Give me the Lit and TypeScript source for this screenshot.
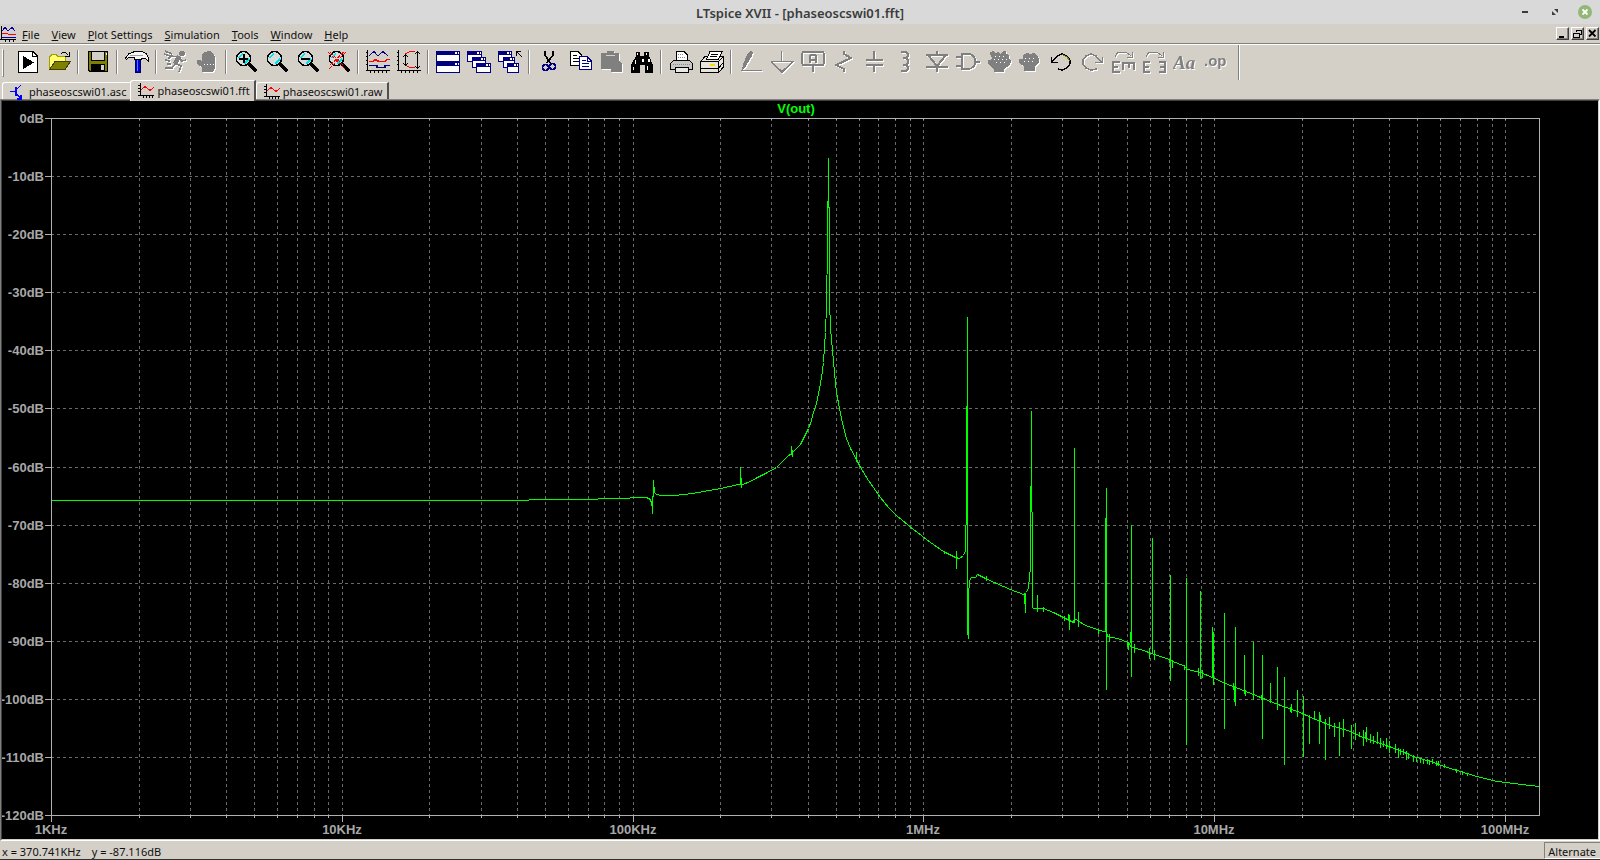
import { LitElement, html, css, svg } from "lit";
import { customElement, state } from "lit/decorators.js";
import { classMap } from "lit/directives/class-map.js";

/* ---------- toolbar artwork, each on a 24 x 24 grid ---------- */

const lens = (inner: unknown) => svg`
  <path d="M15 14 L22.5 21.5" stroke="#000" stroke-width="3" fill="none"/>
  <circle cx="9.5" cy="8.5" r="7" fill="#d4dcdc" stroke="#000" stroke-width="1.3"/>
  <path d="M4.5 8 L9 3.5 M10 14 L15 9" stroke="#00e0e8" stroke-width="1.6" fill="none"/>
  ${inner}`;

const win = (x: number, y: number, w: number, h: number) => svg`
  <rect x=${x + 0.5} y=${y + 0.5} width=${w - 1} height=${h - 1} fill="#fff" stroke="#000080"/>
  <rect x=${x} y=${y} width=${w} height="4" fill="#000080"/>
  <rect x=${x + w - 5} y=${y + 1} width="2" height="2" fill="#fff"/>
  <rect x=${x + w - 2} y=${y + 1} width="1" height="2" fill="#fff"/>`;

const axes = svg`<path d="M1.5 0 V21 M0 20.5 H24 M0 2.5 H2 M0 6.5 H2 M0 10.5 H2 M0 14.5 H2
  M4.5 20 V23 M8.5 20 V23 M12.5 20 V23 M16.5 20 V23 M20.5 20 V23" stroke="#000" fill="none"/>`;

const g = "#808080";

interface Tool {
  label: string;
  off?: boolean;
  end?: boolean;
  art: unknown;
}

const TOOLS: Tool[] = [
  { label: "Run", art: svg`<path d="M2.5 1.5 H17 L21.5 6 V22.5 H2.5 Z" fill="#fff" stroke="#000"/><path d="M16.5 1.5 V6.5 H21.5" fill="none" stroke="#000"/><path d="M7 6 L18 12.5 L7 19 Z"/>` },
  { label: "Open", end: true, art: svg`<path d="M2.5 19 V7 L5 4.5 H9 L11 6.5 H18.5 V12 H9 Z" fill="#ffff70" stroke="#a0a000"/><path d="M2.5 19.5 L8 11.5 H23.5 L18 19.5 Z" fill="#808000" stroke="#404000"/><path d="M14 4 L16 2 H18 L21 5 M22.5 2 V6.5 H18" fill="none" stroke="#000"/>` },
  { label: "Save", end: true, art: svg`<path d="M2.5 1.5 H21.5 V21.5 H4 L2.5 20 Z" fill="#808000" stroke="#000"/><rect x="5.5" y="1.5" width="13" height="9" fill="#d4d0c8" stroke="#000"/><rect x="5" y="14" width="14" height="7" fill="#000"/><rect x="15" y="15" width="3" height="5" fill="#d4d0c8"/><path d="M20 3 h1 v2 h-1z" fill="#fff"/>` },
  { label: "Control Panel", end: true, art: svg`<path d="M10.5 8 H15.5 V22.5 H10.5 Z" fill="#0000d0" stroke="#000060"/><path d="M12.5 9 V21" stroke="#4a7cff"/><path d="M.5 8 L4 3.5 L8 2.5 V1.5 H17 L21 3.5 L23.5 8 V11 L20 8 H16 V9.5 H9.5 V7 H4 L1.5 9.5 Z" fill="#f4f4f4" stroke="#000"/><path d="M5 5.5 H18" stroke="#a0a0a0"/>` },
  { label: "Run simulation", off: true, art: svg`<circle cx="18" cy="3.5" r="2.8" fill=${g}/><path d="M15 6 L11 14" stroke=${g} stroke-width="4.5"/><path d="M15 7 L7 6 L4 9 M15 8 L18 11 L22 10 M11 13 L17 16 L15 22 M11 14 L8 18 L1 18 M1 1 L8 4 M0 4 L6 6 M1 10 L6 11 M3 14 L7 14" fill="none" stroke=${g} stroke-width="1.6"/>` },
  { label: "Halt", off: true, end: true, art: svg`<path d="M7 22 V17 L2 14 V10 H5 L7 12 V4 L9 2 H11 L12 1 H15 L16 2 L19 4 L20 7 V18 L18 22 Z" fill=${g}/><path d="M9 14.5 H19" stroke="#fff" stroke-dasharray="1 2"/>` },
  { label: "Zoom in", art: lens(svg`<path d="M5 9 H14 M9.5 4 V13" stroke="#000" stroke-width="2"/>`) },
  { label: "Pan", art: lens("") },
  { label: "Zoom out", art: lens(svg`<path d="M5 9 H14" stroke="#000" stroke-width="2"/>`) },
  { label: "Zoom full extents", end: true, art: lens(svg`<path d="M1 2 L19 20 M19 2 L1 20 M3 2 L17 16 M17 2 L3 15" stroke="#f00" stroke-width="1.3" stroke-dasharray="4 1"/>`) },
  { label: "Autorange", art: svg`${axes}<path d="M3 6 L8 1.5 L12 6 L17 1.5 L22 6" fill="none" stroke="#000080"/><path d="M3 11.5 H7 L9 9.5 L13 11.5 H19 L21 9.5 H24" fill="none" stroke="#f00" stroke-width="1.4"/><path d="M3 15.5 H11 V17.5 H19 V15.5 H24" fill="none" stroke="#000080" stroke-width="1.4"/>` },
  { label: "Set limits", end: true, art: svg`${axes}<path d="M8 4 L12 2 L18 1 M8 15 L12 17 L18 18" fill="none" stroke="#f00"/><path d="M8.5 5 V15 M6 7 L8.5 4.5 L11 7 M6 13 L8.5 15.5 L11 13 M20.5 2 V18 M18 4 L20.5 1.5 L23 4 M18 16 L20.5 18.5 L23 16" fill="none" stroke="#000"/>` },
  { label: "Tile windows", art: svg`${win(0, 1, 24, 11)}${win(0, 12, 24, 11)}` },
  { label: "Cascade windows", art: svg`${win(0, 1, 15, 11)}${win(5, 7, 14, 11)}${win(9, 13, 15, 10)}` },
  { label: "Close windows", end: true, art: svg`${win(0, 1, 14, 11)}${win(5, 7, 12, 11)}${win(9, 13, 12, 10)}<path d="M18.5 6 V1.5 H23 M19 2 L24 7" fill="none" stroke="#000" stroke-width="1.4"/>` },
  { label: "Cut", art: svg`<path d="M8 1 V5 L13 13 M16 1 V5 L10 13" fill="none" stroke="#000" stroke-width="1.6"/><circle cx="8.5" cy="17.5" r="3" fill="none" stroke="#000080" stroke-width="1.6"/><circle cx="15.5" cy="16.5" r="3" fill="none" stroke="#000080" stroke-width="1.6"/>` },
  { label: "Copy", art: svg`<path d="M2.5 1.5 H10 L13.5 5 V15.5 H2.5 Z" fill="#fff" stroke="#000"/><path d="M5 5.5 H9 M5 8.5 H11 M5 11.5 H11" stroke="#000"/><path d="M11.5 6.5 H19 L23.5 11 V19.5 H11.5 Z" fill="#fff" stroke="#000080"/><path d="M14 10.5 H18 M14 13.5 H21 M14 16.5 H21 M19 6.5 V11 H23" fill="none" stroke="#000080"/>` },
  { label: "Paste", off: true, art: svg`<path d="M2 3 H8 V1 H15 V3 H20 V11 L23 13 V22 H12 V19 H2 Z" fill=${g}/><path d="M7 5.5 H16" stroke="#d4d0c8"/>` },
  { label: "Find", end: true, art: svg`<path d="M6 2 H10 V6 H14 V2 H19 V6 L23 15 V23 H15 V15 H10 V23 H1 V15 L6 6 Z" fill="#000"/><path d="M7 4 h1 M16 4 h1 M5.5 10 V14 M3.5 17 V20 M13 9 V12 M17.5 16 V20 M19 9 V12" stroke="#fff" stroke-width="1.4"/>` },
  { label: "Print", art: svg`<path d="M7.5 10 V1.5 H15 L18.5 5 V10" fill="#fff" stroke="#000"/><path d="M4.5 10.5 H20.5 L23.5 13.5 V19.5 H1.5 V13.5 Z" fill="#c8c8c8" stroke="#000"/><path d="M6.5 22.5 V17.5 H19.5 V22.5 Z" fill="#e8e8e8" stroke="#000"/><path d="M9 4.5 H14 M9 7.5 H16 M4 14.5 H21" stroke="#888" stroke-dasharray="1 1"/>` },
  { label: "Print setup", end: true, art: svg`<path d="M.5 11.5 L5 6.5 H23.5 V17 L18.5 22.5 H.5 Z" fill="#e8e4dc" stroke="#000"/><path d="M6.5 9.5 L10 1.5 H22 L18.5 9.5 Z" fill="#fff" stroke="#000"/><path d="M11 4.5 H18 M10 6.5 H17 M.5 11.5 H18.5 V22 M.5 18.5 H18.5 M18.5 11.5 L23 7 M18.5 18 L23 13" fill="none" stroke="#000"/><path d="M10 15 H15" stroke="#f0e000" stroke-width="2"/>` },
  { label: "Wire", off: true, art: svg`<path d="M3 20 L4 14 L9 3 L12 1 L14 3 L13 6 L7 16 Z" fill=${g}/><path d="M2 20.5 H23" stroke=${g}/>` },
  { label: "Ground", off: true, art: svg`<path d="M11.5 1 V11 M1 11.5 H23 L12 22 L1 11.5" fill="none" stroke=${g} stroke-width="1.6"/>` },
  { label: "Label net", off: true, art: svg`<path d="M2 2 H22 L23 4 V13 L22 15 H2 L1 13 V4 Z M12 15 V22" fill="none" stroke=${g} stroke-width="2"/><path d="M9 13 V6 L10 5 H14 L15 6 V13 M9 10 H15" fill="none" stroke=${g} stroke-width="2"/>` },
  { label: "Resistor", off: true, art: svg`<path d="M12 1 V4 L19 8 L4 15 L12 19 V22" fill="none" stroke=${g} stroke-width="2"/>` },
  { label: "Capacitor", off: true, art: svg`<path d="M11 1 V9 M3 10 H20 M3 15 H20 M11 16 V22" fill="none" stroke=${g} stroke-width="2"/>` },
  { label: "Inductor", off: true, art: svg`<path d="M7 2 H12 L14 4 V6 L12 8 H9 M12 8 L14 10 V13 L12 15 H9 M12 15 L14 17 V19 L12 21 H7" fill="none" stroke=${g} stroke-width="2.2"/>` },
  { label: "Diode", off: true, art: svg`<path d="M12 1 V5 M1 5 H23 M3 5 L12 16 L21 5 M1 17 H23 M12 17 V22" fill="none" stroke=${g} stroke-width="2"/>` },
  { label: "Component", off: true, art: svg`<path d="M0 7 H5 M0 16 H5 M5 4 H12 C17 4 19 8 19 11.5 C19 15 17 19 12 19 H5 M6 3 V20 M19 12 H24" fill="none" stroke=${g} stroke-width="2"/>` },
  { label: "Move", off: true, art: svg`<path d="M7 22 V19 L1 14 V10 H4 L5 8 L3 4 V2 L6 1 L9 3 L11 2 L13 4 L16 1 H19 V4 L22 5 V8 L24 11 L23 15 L17 19 V22 Z" fill=${g}/><path d="M8 6.5 H20 M7 9.5 H21 M9 12.5 H18" stroke="#fff" stroke-dasharray="1 3"/>` },
  { label: "Drag", off: true, art: svg`<path d="M6 21 V16 L1 13 V9 L5 9 V5 L9 3 L12 4 L16 3 L19 5 L21 9 V13 L17 16 V21 Z" fill=${g}/><path d="M7 8.5 H18 M6 11.5 H15" stroke="#fff" stroke-dasharray="1 3"/>` },
  { label: "Undo", art: svg`<path d="M3 12 L9 5.5 L13 4 L18 6 L21 10 V14 L18 18 L13 20 L9 19" fill="none" stroke="#000" stroke-width="1.4"/><path d="M13 4.5 L18 7 L20.5 11" fill="none" stroke="#808000"/><path d="M2.5 7 V12.5 H9" fill="none" stroke="#000" stroke-width="1.6"/>` },
  { label: "Redo", off: true, art: svg`<path d="M21 12 L16 6 L11 4 L6 6 L3 10 V14 L6 18 L11 20 L17 19" fill="none" stroke=${g} stroke-width="1.5"/><path d="M22.5 7 V12.5 H15" fill="none" stroke=${g} stroke-width="1.8"/>` },
  { label: "Rotate", off: true, art: svg`<path d="M4 7 L7 2 H15 L20 6 M21 2 V7 H16" fill="none" stroke=${g}/><path d="M9 12 H2 V22 H9 M2 17 H7 M12 20 V13 H24 M18 12 V18 M23 12 V20" fill="none" stroke=${g} stroke-width="2"/>` },
  { label: "Mirror", off: true, art: svg`<path d="M4 7 L7 2 H15 L20 6 M21 2 V7 H16" fill="none" stroke=${g}/><path d="M8 12 H2 V22 H8 M2 17 H7 M17 12 H23 V22 H17 M18 17 H23" fill="none" stroke=${g} stroke-width="2"/>` },
  { label: "Text", off: true, art: svg`<text x="0" y="19" class="glyph serif">Aa</text>` },
  { label: "SPICE directive", off: true, art: svg`<text x="0" y="16" class="glyph">.op</text>` },
];

/* ---------- spectrum, in chart units ---------- */

const BOX = { left: 51, right: 1539, top: 118, bottom: 815 };

const CURVE: number[][] = [
  [51, 500], [528, 500], [529, 499], [597, 499], [598, 498], [629, 498], [630, 497], [646, 497], [650, 499],
  [652, 507], [652, 513], [653, 480], [654, 492], [656, 494], [661, 495], [674, 495], [692, 493], [703, 491],
  [720, 488], [738, 484], [742, 484], [750, 481], [757, 477], [765, 473], [776, 467], [782, 461], [787, 456],
  [791, 453], [796, 448], [800, 444], [804, 436], [808, 428], [811, 420], [813, 412], [816, 403],
  [819, 388], [821, 377], [823, 362], [824, 345], [825, 332], [826, 305], [827, 245], [828, 158], [829, 255],
  [829, 300], [830, 328], [832, 350], [834, 372], [836, 392], [839, 408], [842, 423], [846, 438], [850, 448],
  [855, 457], [860, 467], [868, 480], [880, 497], [888, 507], [896, 515], [913, 529], [930, 542], [943, 551],
  [955, 557], [959, 558], [963, 555], [965, 550], [966, 500], [967, 317], [967, 631], [968, 638], [968, 595],
  [969, 580], [971, 577], [975, 577], [977, 574], [985, 578], [996, 583], [1010, 589], [1023, 594], [1026, 592],
  [1028, 587], [1030, 567], [1031, 411], [1032, 607], [1033, 608], [1043, 608], [1053, 612], [1063, 617],
  [1073, 622], [1074, 618], [1077, 620], [1085, 625], [1097, 629], [1103, 631], [1106, 630], [1107, 636],
  [1117, 638], [1128, 642], [1131, 647], [1140, 649], [1154, 654], [1169, 659], [1172, 661], [1183, 665],
  [1187, 669], [1200, 672], [1212, 677], [1225, 683], [1243, 690], [1253, 694], [1270, 701], [1283, 706],
  [1297, 711], [1313, 718], [1330, 725], [1347, 730], [1363, 737], [1380, 743], [1397, 749], [1413, 756],
  [1430, 761], [1447, 767], [1463, 772], [1480, 777], [1497, 781], [1513, 783], [1530, 785], [1539, 786],
];

/* x, upper end, lower end */
const SPURS: number[][] = [
  [740, 467, 484], [741, 478, 487], [791, 446, 454], [792, 450, 456], [856, 452, 461], [944, 551, 553],
  [956, 551, 568], [986, 576, 580], [1024, 594, 603], [1025, 594, 612], [1037, 595, 611],
  [1043, 607, 611], [1064, 616, 620], [1068, 614, 618], [1069, 615, 629], [1074, 448, 622], [1078, 612, 626],
  [1098, 629, 633], [1105, 518, 631], [1106, 488, 689], [1109, 634, 641], [1127, 642, 646], [1128, 642, 649],
  [1130, 632, 642], [1131, 525, 676], [1134, 644, 652], [1149, 648, 658], [1152, 538, 653], [1154, 650, 659],
  [1169, 659, 662], [1170, 575, 680], [1172, 660, 667], [1184, 665, 669], [1186, 578, 744], [1198, 668, 675],
  [1200, 591, 678], [1202, 670, 677], [1212, 627, 677], [1213, 632, 684], [1224, 613, 728], [1233, 683, 689],
  [1234, 688, 701], [1235, 627, 705], [1244, 655, 693], [1245, 690, 695], [1253, 642, 699], [1261, 695, 699],
  [1262, 655, 738], [1270, 683, 702], [1277, 667, 709], [1284, 677, 764], [1290, 707, 711], [1291, 704, 712],
  [1297, 690, 716], [1303, 696, 756], [1309, 715, 743], [1314, 711, 719], [1319, 712, 743], [1320, 715, 720],
  [1325, 719, 759], [1329, 717, 728], [1334, 723, 736], [1339, 722, 755], [1343, 719, 736], [1351, 725, 748],
  [1355, 723, 739], [1359, 732, 736], [1363, 730, 745], [1365, 732, 737], [1366, 727, 741], [1370, 734, 742],
  [1373, 736, 743], [1377, 732, 743], [1380, 738, 747], [1383, 741, 746], [1386, 738, 748], [1389, 741, 752],
  [1395, 744, 752], [1398, 748, 757], [1400, 749, 754], [1403, 749, 754], [1406, 751, 759], [1408, 753, 758],
  [1413, 755, 761], [1416, 757, 761], [1420, 758, 762], [1423, 759, 763], [1427, 759, 763], [1429, 760, 764],
  [1432, 759, 763], [1436, 761, 765], [1438, 761, 765], [1444, 764, 767], [1456, 769, 772], [1462, 771, 774],
  [1467, 773, 775],
];

@customElement("spectrum-plot")
export class SpectrumPlot extends LitElement {
  @state() private w = 0;
  @state() private h = 0;
  private watcher?: ResizeObserver;

  static styles = css`
    :host { display: block; overflow: hidden; background: #000; }
    .sheet { display: block; shape-rendering: crispEdges; }
    .grid { stroke: #6a6a6a; stroke-dasharray: 3 3; fill: none; }
    .frame { stroke: #b0b0b0; fill: none; }
    .trace { stroke: #00ff00; fill: none; }
    text { font: bold 13px "Liberation Sans", Arial, sans-serif; fill: #a8a8a8; }
    .mid { text-anchor: middle; }
    .end { text-anchor: end; }
    .name { fill: #00ff00; }
  `;

  connectedCallback() {
    super.connectedCallback();
    this.watcher = new ResizeObserver(() => {
      this.w = this.clientWidth;
      this.h = this.clientHeight;
    });
    this.watcher.observe(this);
  }

  disconnectedCallback() {
    this.watcher?.disconnect();
    super.disconnectedCallback();
  }

  render() {
    if (!this.w || !this.h) return html``;
    const l = 49, t = 17, r = this.w - 59, b = this.h - 24;
    const snap = (v: number) => Math.round(v) + 0.5;
    const decades = Math.log10(131e6 / 1e3);
    const fx = (f: number) => snap(l + ((r - l) * Math.log10(f / 1e3)) / decades);
    const dy = (db: number) => snap(t + ((b - t) * -db) / 120);
    const ux = (x: number) => snap(l + ((x - BOX.left) * (r - l)) / (BOX.right - BOX.left));
    const uy = (y: number) => snap(t + ((y - BOX.top) * (b - t)) / (BOX.bottom - BOX.top));

    let grid = "";
    let ticks = "";
    for (let f = 1e3; f < 1.3e8; f *= 10) {
      for (let m = 1; m < 10 && f * m < 1.3e8; m++) {
        const x = fx(f * m);
        if (f * m > 1e3) grid += `M${x} ${t} V${b}`;
        ticks += `M${x} ${b} V${b + (m === 1 ? 7 : 3)}M${x} ${t} v2`;
      }
    }
    const levels = Array.from({ length: 13 }, (_, i) => -10 * i);
    for (const db of levels) {
      if (db < 0 && db > -120) grid += `M${l} ${dy(db)} H${r}`;
      ticks += `M${l - 6} ${dy(db)} H${l}`;
    }
    const curve = CURVE.map(([x, y]) => `${ux(x)},${uy(y)}`).join(" ");
    const spurs = SPURS.map(([x, a, z]) => `M${ux(x)} ${uy(a) - 0.5} V${uy(z) + 0.5}`).join("");
    const marks: [number, string][] = [
      [1e3, "1KHz"], [1e4, "10KHz"], [1e5, "100KHz"], [1e6, "1MHz"], [1e7, "10MHz"], [1e8, "100MHz"],
    ];

    return html`<svg class="sheet" width=${this.w} height=${this.h} role="img" aria-label="V(out) spectrum">
      <path class="grid" d=${grid} />
      <path class="frame" d="M${l + 0.5} ${t + 0.5} H${r + 0.5} V${b + 0.5} H${l + 0.5} Z ${ticks}" />
      <polyline class="trace" points=${curve} />
      <path class="trace" d=${spurs} />
      <text class="mid name" x=${Math.round((l + r) / 2) + 1} y="12">V(out)</text>
      ${levels.map((db) => svg`<text class="end" x="42" y=${Math.floor(dy(db)) + 5}>${db}dB</text>`)}
      ${marks.map(([f, s]) => svg`<text class="mid" x=${Math.floor(fx(f))} y=${b + 19}>${s}</text>`)}
    </svg>`;
  }
}

const plotMark = svg`<path d="M2.5 0 V13 M0 12.5 H16 M0 2.5 H2 M0 5.5 H2 M0 8.5 H2 M5.5 13 V15 M8.5 13 V15 M11.5 13 V15 M14.5 13 V15" stroke="#000" fill="none"/><path d="M3 7 L6 4 H8 L11 7 H13 L16 4" stroke="#f00" stroke-width="1.4" fill="none"/>`;
const deviceMark = svg`<path d="M0 7.5 H6 M6 6 L11 1 M6 9 L10 14 M11 11 V15 H7" stroke="#00f" stroke-width="1.2" fill="none"/><path d="M6 3 V12" stroke="#00f" stroke-width="2"/>`;

const MENUS = ["File", "View", "Plot Settings", "Simulation", "Tools", "Window", "Help"];
const TABS = [
  { name: "phaseoscswi01.asc", mark: deviceMark },
  { name: "phaseoscswi01.fft", mark: plotMark },
  { name: "phaseoscswi01.raw", mark: plotMark },
];

@customElement("app-root")
export class AppRoot extends LitElement {
  @state() private tab = 1;

  static styles = css`
    :host {
      display: flex; flex-direction: column; height: 100vh; box-sizing: border-box;
      background: #d4d0c8; color: #101010; border-bottom: 1px solid #303030;
      font: 11px/16px "Noto Sans", "Open Sans", sans-serif;
    }
    button { font: inherit; color: inherit; background: none; border: 0; padding: 0; margin: 0; display: block; }
    svg { display: block; }
    .title { display: grid; grid-template-columns: 1fr auto 1fr; align-items: center; height: 24px; background: #d9d9d9; color: #3c3c3c; }
    .title h1 { grid-column: 2; margin: 0; padding-top: 2px; font-size: 13px; line-height: 22px; font-weight: 600; }
    .controls { display: flex; justify-content: flex-end; gap: 14px; padding-right: 7px; }
    .menubar { display: flex; align-items: center; height: 19px; border-bottom: 1px solid #808080; box-shadow: 0 1px #fff; }
    .menubar nav { display: flex; flex: 1; }
    .menu { padding: 2px 6px 0 6px; line-height: 16px; }
    .mdi { display: flex; gap: 2px; padding-right: 1px; }
    .mdi button { width: 13px; height: 13px; box-sizing: border-box; border: 1px solid; border-color: #fff #404040 #404040 #fff; box-shadow: inset -1px -1px #808080; }
    .tools { display: flex; align-items: flex-start; margin-top: 1px; height: 35px; }
    .grip { width: 2px; height: 28px; margin: 4px 8px 0 2px; box-sizing: border-box; border: 1px solid; border-color: #fff #808080 #808080 #fff; }
    .tool { width: 31px; height: 31px; display: flex; align-items: center; justify-content: center; padding-top: 3px; }
    .off svg { filter: drop-shadow(1px 1px 0 #fff); }
    .sep { width: 8px; height: 24px; margin-top: 5px; display: flex; justify-content: center; }
    .sep::before, .edge { content: ""; width: 2px; box-sizing: border-box; border-left: 1px solid #808080; border-right: 1px solid #fff; }
    .edge { height: 35px; margin-left: 7px; }
    .art { shape-rendering: crispEdges; }
    .glyph { font: bold 15px "Liberation Sans", sans-serif; fill: #808080; }
    .serif { font: bold italic 19px "Liberation Serif", serif; }
    .tabs { display: flex; align-items: flex-end; height: 19px; padding-left: 2px; }
    .tab {
      display: flex; align-items: center; gap: 3px; height: 17px; padding: 1px 4px 0 7px; box-sizing: border-box;
      border: solid; border-width: 1px 2px 0 1px; border-color: #fff #505050 #fff #fff; border-top-left-radius: 3px; position: relative;
    }
    .tab:first-child { border-right-width: 0; }
    .tab.on { height: 21px; margin-bottom: -2px; padding-bottom: 2px; background: #d4d0c8; z-index: 1; }
    .pane { flex: 1; min-height: 0; display: flex; border: 1px solid; border-color: #808080 #fff #fff #808080; }
    .well { flex: 1; min-width: 0; border: 1px solid; border-color: #404040 #d4d0c8 #d4d0c8 #404040; }
    .status { display: flex; height: 18px; padding-left: 2px; }
    .status output { padding-top: 3px; margin-right: 11px; line-height: 15px; }
    .mode { margin: 1px 0 0 auto; padding: 2px 4px 0 3px; border: 1px solid; border-color: #808080 #fff #fff #808080; line-height: 13px; border-right: 0; }
  `;

  render() {
    return html`
      <header class="title">
        <h1>LTspice XVII - [phaseoscswi01.fft]</h1>
        <div class="controls">
          <button aria-label="Minimize"><svg width="16" height="16"><path d="M5 7 h6 v2 h-6z" fill="#3c3c3c" /></svg></button>
          <button aria-label="Maximize"><svg width="16" height="16"><path d="M7 5 H11 V9 Z M5 7 V11 H9 Z" fill="#3c3c3c" /></svg></button>
          <button aria-label="Close"><svg width="16" height="16"><circle cx="8" cy="8" r="7" fill="#93b777" /><path d="M5.5 5.5 L10.5 10.5 M10.5 5.5 L5.5 10.5" stroke="#fff" stroke-width="1.8" /></svg></button>
        </div>
      </header>
      <div class="menubar">
        <svg class="art" width="16" height="16"><path d="M1.5 0 V14 M0 13.5 H16 M5.5 13 V16 M9.5 13 V16 M13.5 13 V16" stroke="#000" fill="none" /><path d="M2 5 L5 1.5 L8 5 L12 1.5 L15 5 M2 11.5 H16" stroke="#0000b0" fill="none" /><path d="M2 7.5 H7 L9 8.5 H16" stroke="#f00" fill="none" /></svg>
        <nav>${MENUS.map((m) => html`<button class="menu"><u>${m[0]}</u>${m.slice(1)}</button>`)}</nav>
        <div class="mdi">
          <button aria-label="Minimize document"><svg width="11" height="11"><path d="M2 8 h5 v2 h-5z" /></svg></button>
          <button aria-label="Restore document"><svg class="art" width="11" height="11"><path d="M4 4 V2.5 H9.5 V6.5 H8 M1.5 5.5 H7.5 V9.5 H1.5 Z" fill="none" stroke="#000" /></svg></button>
          <button aria-label="Close document"><svg width="11" height="11"><path d="M2 2 L8.5 8.5 M8.5 2 L2 8.5" stroke="#000" stroke-width="1.8" /></svg></button>
        </div>
      </div>
      <div class="tools" role="toolbar">
        <span class="grip"></span>
        ${TOOLS.map(
          (t) => html`<button class=${classMap({ tool: true, off: !!t.off })} aria-label=${t.label} ?disabled=${t.off}>
              <svg class="art" width="24" height="24">${t.art}</svg></button
            >${t.end ? html`<span class="sep"></span>` : ""}`
        )}
        <span class="edge"></span>
      </div>
      <div class="tabs" role="tablist">
        ${TABS.map(
          (t, i) => html`<button class=${classMap({ tab: true, on: i === this.tab })} role="tab"
            aria-selected=${i === this.tab ? "true" : "false"} @click=${() => (this.tab = i)}>
            <svg class="art" width="16" height="16">${t.mark}</svg>${t.name}</button>`
        )}
      </div>
      <main class="pane"><spectrum-plot class="well"></spectrum-plot></main>
      <footer class="status">
        <output>x = 370.741KHz</output><output>y = -87.116dB</output>
        <span class="mode">Alternate</span>
      </footer>
    `;
  }
}
